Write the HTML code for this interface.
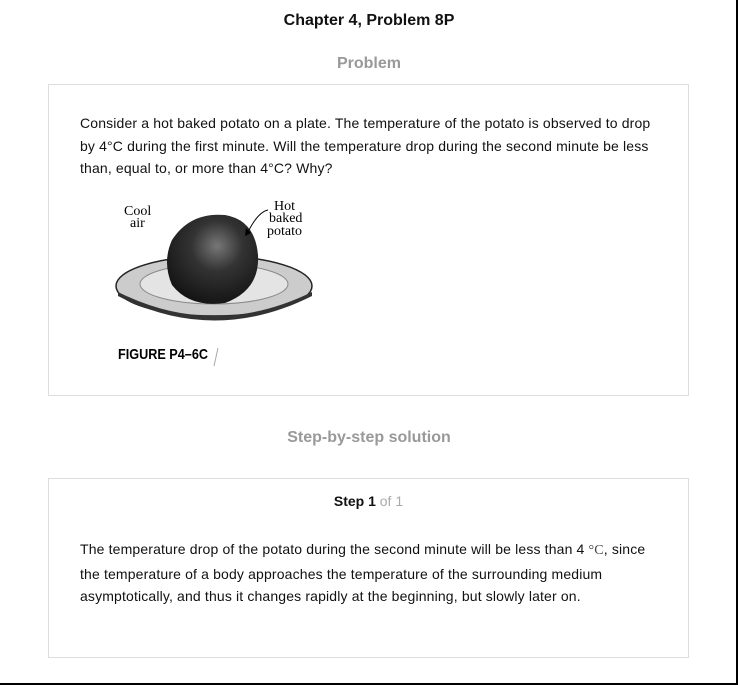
<!DOCTYPE html>
<html><head><meta charset="utf-8"><style>
html,body{margin:0;padding:0;background:#fff;}
body{width:738px;height:685px;position:relative;overflow:hidden;font-family:"Liberation Sans",Arial,sans-serif;color:#111;}
.frame{position:absolute;left:0;top:0;width:736px;height:683px;border-right:2px solid #000;border-bottom:2px solid #000;}
h1{position:absolute;top:12px;left:0;width:738px;text-align:center;font-size:16px;font-weight:bold;margin:0;}
.sec{position:absolute;left:0;width:738px;text-align:center;font-size:16px;font-weight:bold;color:#999;}
.box{position:absolute;left:48px;width:639px;border:1px solid #ddd;}
p{margin:0;font-size:14px;line-height:22.5px;white-space:nowrap;letter-spacing:0.15px;}
</style></head><body>
<div class="frame"></div>
<h1>Chapter 4, Problem 8P</h1>
<div class="sec" style="top:55px">Problem</div>
<div class="box" style="top:84px;height:310px">
<p style="position:absolute;left:31px;top:27px;">Consider a hot baked potato on a plate. The temperature of the potato is observed to drop<br>by 4°C during the first minute. Will the temperature drop during the second minute be less<br>than, equal to, or more than 4°C? Why?</p>
<svg style="position:absolute;left:51px;top:100px" width="240" height="190" viewBox="100 185 240 190">
<defs><radialGradient id="pg" cx="0.55" cy="0.35" r="0.7"><stop offset="0" stop-color="#777"/><stop offset="0.4" stop-color="#333"/><stop offset="1" stop-color="#111"/></radialGradient></defs>
<ellipse cx="214" cy="286" rx="98" ry="30" fill="#ccc" stroke="#222" stroke-width="1.5"/>
<ellipse cx="214" cy="284" rx="74" ry="20" fill="#e4e4e4" stroke="#888"/>
<path d="M118 292 Q214 340 312 292 L312 296 Q214 345 118 296Z" fill="#333"/>
<path d="M172 240 Q190 212 225 215 Q255 220 258 255 Q260 290 225 303 Q190 308 172 285 Q162 262 172 240Z" fill="url(#pg)"/>
<path d="M248 232 Q258 212 268 210" fill="none" stroke="#000"/>
<path d="M245 236 l1 -8 l5 5z" fill="#000"/>
<text x="124" y="215" font-family="Liberation Serif" font-size="14">Cool</text>
<text x="130" y="227" font-family="Liberation Serif" font-size="14">air</text>
<text x="274" y="210" font-family="Liberation Serif" font-size="14">Hot</text>
<text x="269" y="222" font-family="Liberation Serif" font-size="14">baked</text>
<text x="267" y="235" font-family="Liberation Serif" font-size="14">potato</text>
<text x="118" y="359" font-family="Liberation Sans" font-size="15" font-weight="bold" textLength="90" lengthAdjust="spacingAndGlyphs">FIGURE P4–6C</text>
<path d="M218 348 L214 366" stroke="#aaa" stroke-width="1"/>
</svg>
</div>
<div class="sec" style="top:429px">Step-by-step solution</div>
<div class="box" style="top:478px;height:178px">
<div style="position:absolute;top:14px;left:0;width:639px;text-align:center;font-size:14px"><b>Step 1</b> <span style="color:#aaa">of 1</span></div>
<p style="position:absolute;left:31px;top:59px;">The temperature drop of the potato during the second minute will be less than 4 <span style="font-family:'Liberation Serif';color:#444">°C</span>, since<br>the temperature of a body approaches the temperature of the surrounding medium<br>asymptotically, and thus it changes rapidly at the beginning, but slowly later on.</p>
</div>
</body></html>
